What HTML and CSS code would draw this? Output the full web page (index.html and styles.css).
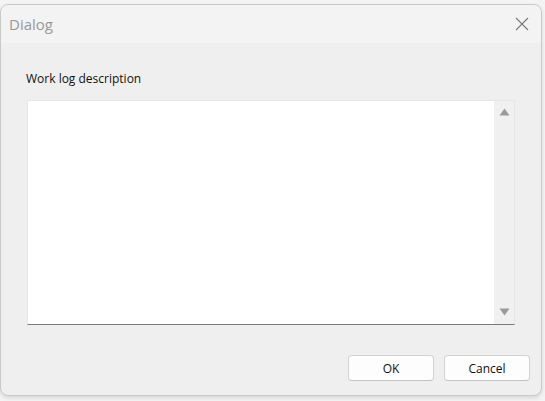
FILE: index.html
```html
<!DOCTYPE html>
<html>
<head>
<meta charset="utf-8">
<link rel="stylesheet" href="styles.css">
</head>
<body>
<div class="window">
  <div class="titlebar">
    <span class="title">Dialog</span>
    <svg class="close" width="14" height="14" viewBox="0 0 14 14"><path d="M1 1 L13 13 M13 1 L1 13" stroke="#7a7a7a" stroke-width="1.1" fill="none"/></svg>
  </div>
  <div class="content">
    <div class="label">Work log description</div>
    <div class="textarea">
      <div class="textfield"></div>
      <div class="scrollbar">
        <svg width="11" height="8" viewBox="0 0 11 8"><path d="M5.5 0.5 L10.5 7.5 L0.5 7.5 Z" fill="#9a9a9a"/></svg>
        <svg width="11" height="8" viewBox="0 0 11 8"><path d="M0.5 0.5 L10.5 0.5 L5.5 7.5 Z" fill="#9a9a9a"/></svg>
      </div>
    </div>
  </div>
  <div class="buttons">
    <button class="btn">OK</button>
    <button class="btn">Cancel</button>
  </div>
</div>
</body>
</html>
```
FILE: styles.css
```css
html, body {
  margin: 0;
  padding: 0;
}
body {
  background: #f4f4f4;
  width: 545px;
  height: 401px;
  overflow: hidden;
  font-family: "Open Sans", "Noto Sans", sans-serif;
}
.window {
  margin-top: 4px;
  width: 540px;
  height: 390px;
  border: 1px solid #c9c9c9;
  border-radius: 8px;
  background: #efefef;
  box-shadow: 0 2px 4px rgba(0,0,0,0.12);
  display: flex;
  flex-direction: column;
  overflow: hidden;
}
.titlebar {
  height: 38px;
  background: #f3f3f3;
  display: flex;
  align-items: center;
  justify-content: space-between;
  padding: 0 12px 0 8px;
}
.title {
  color: #999999;
  font-size: 15px;
}
.close {
  display: block;
}
.content {
  padding: 28px 26px 0 26px;
  flex: 1;
}
.label {
  font-size: 12px;
  color: #111;
  line-height: 16px;
  margin-left: -1px;
}
.textarea {
  margin-top: 13px;
  height: 223px;
  width: 486px;
  border: 1px solid #e6e6e6;
  border-bottom: 1px solid #7a7a7a;
  display: flex;
  background: #fff;
}
.textfield {
  flex: 1;
  background: #fff;
}
.scrollbar {
  width: 20px;
  background: #f0f0f0;
  display: flex;
  flex-direction: column;
  justify-content: space-between;
  align-items: center;
  padding: 7px 0 8px 0;
}
.scrollbar svg { display: block; }
.buttons {
  display: flex;
  justify-content: flex-end;
  gap: 10px;
  padding: 0 11px 14px 0;
}
.btn {
  width: 86px;
  height: 26px;
  background: #fdfdfd;
  border: 1px solid #d2d2d2;
  border-bottom-color: #c4c4c4;
  border-radius: 4px;
  font-family: "Open Sans", "Noto Sans", sans-serif;
  font-size: 12px;
  color: #111;
  padding: 0;
}
```
